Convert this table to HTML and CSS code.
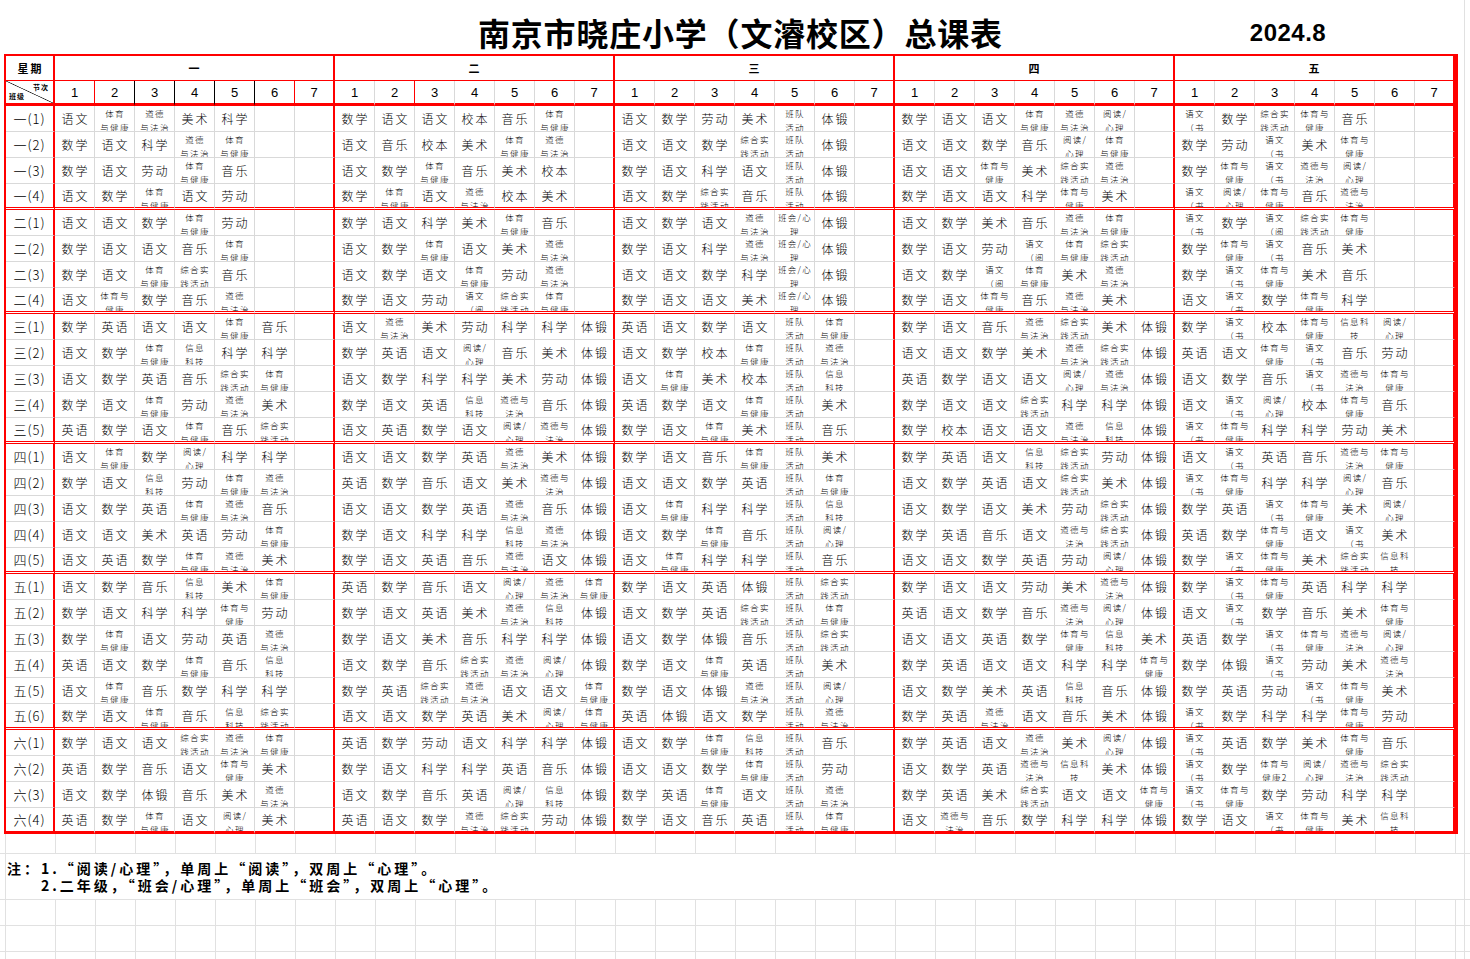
FILE: index.html
```html
<!DOCTYPE html>
<html lang="zh-CN">
<head>
<meta charset="utf-8">
<title>南京市晓庄小学（文濬校区）总课表</title>
<link rel="stylesheet" href="styles.css">
</head>
<body>
<div class="title-row">
  <h1 class="title">南京市晓庄小学（文濬校区）总课表</h1>
  <span class="date">2024.8</span>
</div>
<div class="grid" id="grid">
  <div class="corner">星期</div>
  <div class="hd">一</div>
  <div class="hd">二</div>
  <div class="hd">三</div>
  <div class="hd">四</div>
  <div class="hd">五</div>
  <div class="diag"><span class="tr">节次</span><span class="bl">班级</span></div>
  <div class="num rr">1</div><div class="num br">2</div><div class="num br">3</div><div class="num br">4</div><div class="num br">5</div><div class="num rr">6</div><div class="num we">7</div>
  <div class="num">1</div><div class="num rr">2</div><div class="num">3</div><div class="num">4</div><div class="num">5</div><div class="num">6</div><div class="num we">7</div>
  <div class="num">1</div><div class="num">2</div><div class="num">3</div><div class="num">4</div><div class="num">5</div><div class="num">6</div><div class="num we">7</div>
  <div class="num">1</div><div class="num">2</div><div class="num">3</div><div class="num">4</div><div class="num">5</div><div class="num">6</div><div class="num we">7</div>
  <div class="num">1</div><div class="num">2</div><div class="num">3</div><div class="num">4</div><div class="num">5</div><div class="num">6</div><div class="num we">7</div>
</div>
<div class="below">
  <div class="brow gl h20"></div>
  <div class="brow note">
    <p>注：1.“阅读/心理”，单周上“阅读”，双周上“心理”。</p>
    <p class="indent">2.二年级，“班会/心理”，单周上“班会”，双周上“心理”。</p>
  </div>
  <div class="brow gl"></div>
  <div class="brow gl"></div>
  <div class="brow gl"></div>
</div>
<script src="script.js"></script>
</body>
</html>
```

FILE: styles.css
```css
* { box-sizing: border-box; }
html, body { margin: 0; padding: 0; background: #fff; }
body {
  width: 1470px;
  height: 959px;
  overflow: hidden;
  font-family: "Noto Sans CJK SC", "Noto Sans", sans-serif;
  color: #000;
  background-image: linear-gradient(90deg, transparent 1464px, #e1e1e1 1464px, #e1e1e1 1465px, transparent 1465px);
}
.title-row {
  height: 54px;
  display: flex;
  align-items: flex-end;
  padding-left: 478px;
  padding-bottom: 5px;
}
.title {
  margin: 0;
  font-size: 32px;
  font-weight: 700;
  line-height: 34px;
  letter-spacing: 0.8px;
}
.date {
  margin-left: 247px;
  margin-bottom: 3px;
  font-family: "Liberation Sans", sans-serif;
  font-weight: 700;
  font-size: 24px;
  line-height: 26px;
  letter-spacing: 0.5px;
}
.grid {
  margin-left: 4px;
  width: 1454px;
  display: grid;
  grid-template-columns: 49px repeat(35, 40px);
  grid-template-rows: 25px 25px repeat(28, 26px);
  border-top: 2px solid #f00;
  border-left: 2px solid #f00;
  border-right: 3px solid #f00;
}
.c, .lab, .hd, .num, .corner, .diag {
  border-right: 1px solid #d9d9d9;
  border-bottom: 1px solid #d9d9d9;
  display: flex;
  align-items: center;
  justify-content: center;
  overflow: hidden;
  white-space: nowrap;
}
.c {
  font-size: 12px;
  font-weight: 300;
  letter-spacing: 2px;
  padding-left: 2px;
}
.c.s {
  font-size: 8.5px;
  letter-spacing: 1.3px;
  line-height: 13.5px;
  align-items: flex-start;
  padding-top: 1px;
  padding-left: 1px;
  text-align: center;
}
.lab {
  border-right: 2px solid #f00;
  font-size: 13px;
  font-weight: 300;
  letter-spacing: 1px;
}
.corner {
  border-right: 2px solid #f00;
  border-bottom: 1px solid #f00;
  font-size: 11px;
  font-weight: 700;
  letter-spacing: 2px;
  padding-left: 2px;
}
.hd {
  grid-column: span 7;
  border-right: 2px solid #f00;
  border-bottom: 1px solid #f00;
  font-size: 11px;
  font-weight: 700;
}
.diag {
  border-right: 2px solid #f00;
  border-bottom: 3px solid #f00;
  background: linear-gradient(to bottom left, transparent calc(50% - 0.7px), #222 50%, transparent calc(50% + 0.7px));
  flex-direction: column;
  align-items: stretch;
  justify-content: space-between;
  padding: 2px 4px 3px 3px;
  font-size: 7px;
  font-weight: 700;
  line-height: 8px;
  letter-spacing: 1px;
}
.diag .tr { text-align: right; }
.diag .bl { text-align: left; }
.num {
  border-bottom: 3px solid #f00;
  font-family: "Liberation Sans", sans-serif;
  font-size: 13px;
}
.num.rr { border-right: 1px solid #f00; }
.num.br { border-right: 1px solid #000; }
.we { border-right: 2px solid #f00; }
.num.we { border-right: 2px solid #f00; }
.ge { border-bottom: 3px double #f00; }
.le { border-bottom: 3px solid #f00; }

.below { width: 1470px; }
.brow {
  height: 26px;
  border-bottom: 1px solid #e1e1e1;
  background-image:
    linear-gradient(90deg, transparent 5px, #e1e1e1 5px, #e1e1e1 6px, transparent 6px);
}
.brow.gl {
  background-image:
    linear-gradient(90deg, transparent 5px, #e1e1e1 5px, #e1e1e1 6px, transparent 6px),
    repeating-linear-gradient(90deg, #e1e1e1 0, #e1e1e1 1px, transparent 1px, transparent 40px);
  background-size: 100% 100%, 1415px 100%;
  background-position: 0 0, 55px 0;
  background-repeat: no-repeat, no-repeat;
}
.brow.h20 { height: 20px; }
.note {
  height: 46px;
  padding: 6px 0 0 7px;
  font-size: 14px;
  font-weight: 700;
  letter-spacing: 3px;
  line-height: 17px;
}
.note p { margin: 0; white-space: nowrap; }
.note .indent { padding-left: 34px; }
```

FILE: script.js
```js
(function () {
  var W = { '语': '语文', '数': '数学', '英': '英语', '科': '科学', '美': '美术', '音': '音乐', '劳': '劳动', '校': '校本', '锻': '体锻' };
  var S = {
    A: '体育<br>与健康', a: '体育与<br>健康', B: '道德<br>与法治', b: '道德与<br>法治',
    C: '综合实<br>践活动', D: '信息<br>科技', d: '信息科<br>技', E: '阅读/<br>心理',
    F: '班队<br>活动', G: '班会/心<br>理', H: '语文<br>（书', I: '语文<br>（阅', J: '体育与<br>健康2'
  };
  var data = [
    ['一', [
      '语AB美科-- 数语语校音A- 语数劳美F锻- 数语语ABE- H数Ca音--',
      '数语科BA-- 语音校美AB- 语语数CF锻- 语语数音EA- 数劳H美a--',
      '数语劳A音-- 语数A音美校- 数语科语F锻- 语语a美CB- 数aHbE--',
      '语数A语劳-- 数A语B校美- 语数C音F锻- 数语语科a美- HEa音b--'
    ]],
    ['二', [
      '语语数A劳-- 数语科美A音- 语数语BG锻- 语数美音BA- H数ICa--',
      '数语语音A-- 语数A语美B- 数语科BG锻- 数语劳IAC- 数aH音美--',
      '数语AC音-- 语数语A劳B- 语语数科G锻- 语数IA美B- 数Ha美音--',
      '语a数音B-- 数语劳ICA- 数语语美G锻- 数语a音B美- 语H数a科--'
    ]],
    ['三', [
      '数英语语A音- 语B美劳科科锻 英语数语FA- 数语音BC美锻 数H校adE-',
      '语数AD科科- 数英语E音美锻 语数校AFB- 语语数美BC锻 英语aH音劳-',
      '语数英音CA- 语数科科美劳锻 语A美校FD- 英数语语EB锻 语数音Hba-',
      '数语A劳B美- 数语英Db音锻 英数语AF美- 数语语C科科锻 语HE校a音-',
      '英数语A音C- 语英数语Eb锻 数语A美F音- 数校语语BD锻 Ha科科劳美-'
    ]],
    ['四', [
      '语A数E科科- 语语数英B美锻 数语音AF美- 数英语DC劳锻 语H英音ba-',
      '数语D劳AB- 英数音语美b锻 语语数英FA- 语数英语C美锻 Ha科科E音-',
      '语数英AB音- 语语数英B音锻 语A科科FD- 语数语美劳C锻 数英Ha美E-',
      '语语美英劳A- 数语科科DB锻 语数A音FE- 数英音语bC锻 英数a语H美-',
      '语英数AB美- 数语英音B语锻 语A科科F音- 语语数英劳E锻 数Ha美Cd-'
    ]],
    ['五', [
      '语数音D美A- 英数音语EBA 数语英锻FC- 数语语劳美b锻 数Ha英科科-',
      '数语科科a劳- 数语英美BD锻 语数英CFA- 英语数音bE锻 语H数音美a-',
      '数A语劳英B- 数语美音科科锻 语数锻音FC- 语语英数aD美 英数HabE-',
      '英语数A音D- 语数音CBE锻 数语A英F美- 数英语语科科a 数锻H劳美b-',
      '语A音数科科- 数英CB语语A 数语锻BFE- 语数美英D音锻 数英劳Ha美-',
      '数语A音DC- 语语数英美EA 英锻语数FB- 数英B语音美锻 H数科科a劳-'
    ]],
    ['六', [
      '数语语CBA- 英数劳语科科锻 语数ADF音- 数英语B美E锻 H英数美a音-',
      '英数音语a美- 数语科科英音锻 语语数AF劳- 语数英bd美锻 H数JEbC-',
      '语数锻音美B- 语数音英ED锻 数英A语FB- 数英美C语语a Ha数劳科科-',
      '英数A语E美- 英语数BC劳锻 数语音英FA- 语b音数科科锻 数语Ha美d-'
    ]]
  ];
  var grid = document.getElementById('grid');
  data.forEach(function (g, gi) {
    var rows = g[1];
    rows.forEach(function (row, ri) {
      var end = ri === rows.length - 1;
      var last = end && gi === data.length - 1;
      var edge = last ? ' le' : (end ? ' ge' : '');
      var lab = document.createElement('div');
      lab.className = 'lab' + edge;
      lab.textContent = g[0] + '(' + (ri + 1) + ')';
      grid.appendChild(lab);
      var s = row.replace(/ /g, '');
      for (var k = 0; k < 35; k++) {
        var ch = s.charAt(k);
        var d = document.createElement('div');
        var cls = 'c' + (k % 7 === 6 ? ' we' : '') + edge;
        if (W[ch]) {
          d.textContent = W[ch];
        } else if (S[ch]) {
          d.innerHTML = S[ch];
          cls += ' s';
        }
        d.className = cls;
        grid.appendChild(d);
      }
    });
  });
})();
```
